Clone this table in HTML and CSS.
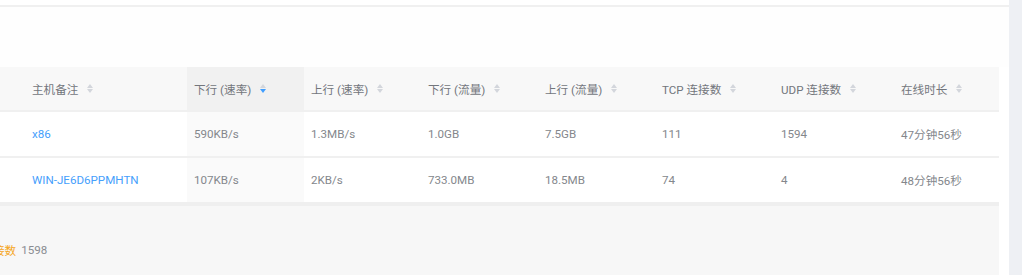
FILE: index.html
```html
<!DOCTYPE html>
<html lang="zh-CN">
<head>
<meta charset="utf-8">
<link rel="stylesheet" href="styles.css">
</head>
<body>
<div class="page">
  <div class="main">
    <div class="topbar"></div>
    <div class="spacer"></div>
    <div class="table">
      <div class="row head">
        <div class="cell">主机备注<span class="sort"><i class="up"></i><i class="down"></i></span></div>
        <div class="cell sorted">下行 (速率)<span class="sort"><i class="up"></i><i class="down active"></i></span></div>
        <div class="cell">上行 (速率)<span class="sort"><i class="up"></i><i class="down"></i></span></div>
        <div class="cell">下行 (流量)<span class="sort"><i class="up"></i><i class="down"></i></span></div>
        <div class="cell">上行 (流量)<span class="sort"><i class="up"></i><i class="down"></i></span></div>
        <div class="cell">TCP 连接数<span class="sort"><i class="up"></i><i class="down"></i></span></div>
        <div class="cell">UDP 连接数<span class="sort"><i class="up"></i><i class="down"></i></span></div>
        <div class="cell">在线时长<span class="sort"><i class="up"></i><i class="down"></i></span></div>
      </div>
      <div class="row body">
        <div class="cell"><a class="link">x86</a></div>
        <div class="cell sorted">590KB/s</div>
        <div class="cell">1.3MB/s</div>
        <div class="cell">1.0GB</div>
        <div class="cell">7.5GB</div>
        <div class="cell">111</div>
        <div class="cell">1594</div>
        <div class="cell">47分钟56秒</div>
      </div>
      <div class="row body">
        <div class="cell"><a class="link">WIN-JE6D6PPMHTN</a></div>
        <div class="cell sorted">107KB/s</div>
        <div class="cell">2KB/s</div>
        <div class="cell">733.0MB</div>
        <div class="cell">18.5MB</div>
        <div class="cell">74</div>
        <div class="cell">4</div>
        <div class="cell">48分钟56秒</div>
      </div>
    </div>
    <div class="footer">
      <span class="label">接数</span><span class="value">1598</span>
    </div>
  </div>
  <div class="scrollbar"></div>
</div>
</body>
</html>
```

FILE: styles.css
```css
* { box-sizing: border-box; }
html, body { margin: 0; padding: 0; background: #ffffff; }
body {
  font-family: Roboto, "Noto Sans CJK SC", sans-serif;
  font-size: 11.6px;
  color: #606266;
  overflow: hidden;
  width: 1022px;
  height: 275px;
}
.page { display: flex; height: 275px; }
.main { width: 1009px; display: flex; flex-direction: column; }
.scrollbar { width: 13px; background: #eef0f4; }
.topbar { border-bottom: 2px solid #f0f0f0; height: 7px; }
.spacer { height: 60px; background: #fefefe; }
.table { width: 999px; }
.row {
  display: grid;
  grid-template-columns: 187px 117px 117px 117px 117px 119px 120px 105px;
}
.head { height: 43px; background: #f8f8f8; }
.head .cell { color: #73767c; }
.head .sorted { background: #f1f1f1; }
.body { height: 46px; background: #fff; border-top: 2px solid #f0f0f0; }
.body .sorted { background: #fafafa; }
.cell {
  display: flex;
  align-items: center;
  padding-left: 7px;
  white-space: nowrap;
  color: #84878c;
}
.row .cell:first-child { padding-left: 32px; }
.link { color: #46a0fc; }
.sort {
  display: inline-flex;
  flex-direction: column;
  gap: 1px;
  margin-left: 9px;
}
.sort i {
  display: block;
  width: 0; height: 0;
  border-left: 3px solid transparent;
  border-right: 3px solid transparent;
}
.sort .up { border-bottom: 4px solid #d3d6dc; }
.sort .down { border-top: 4px solid #d3d6dc; }
.sort .down.active { border-top-color: #409eff; }
.footer {
  width: 999px;
  flex: 1;
  background: #f7f7f7;
  border-top: 4px solid #efefef;
  display: flex;
  align-items: center;
  padding-top: 18px;
  gap: 5px;
}
.label { color: #f5a623; margin-left: -7px; }
.value { color: #8a8d92; }
```
